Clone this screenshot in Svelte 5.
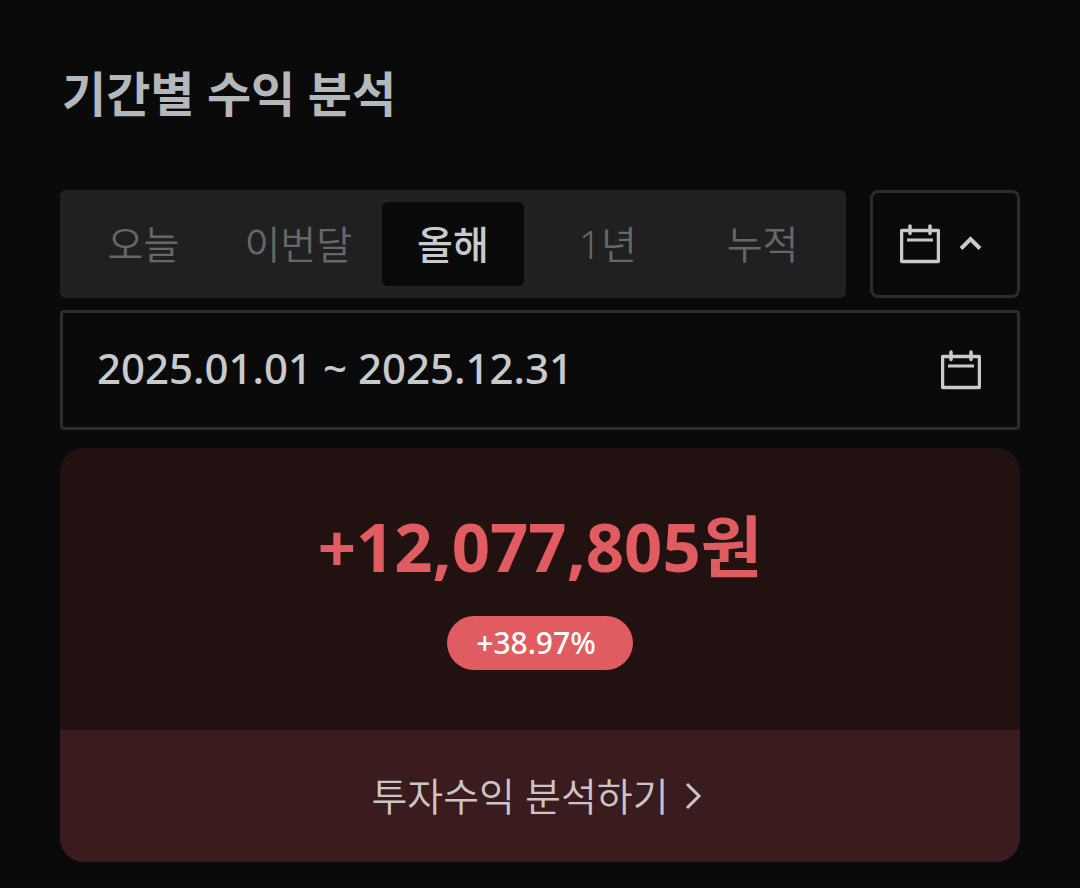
<script lang="ts">
  type Period = { id: string; label: string };

  const periods: Period[] = [
    { id: 'today', label: '오늘' },
    { id: 'month', label: '이번달' },
    { id: 'thisYear', label: '올해' },
    { id: 'year', label: '1년' },
    { id: 'total', label: '누적' }
  ];

  let selected = $state('thisYear');
  let rangeOpen = $state(true);
  let range = $state('2025.01.01 ~ 2025.12.31');

  const profit = 12077805;
  const rate = 38.97;

  function signed(value: number): string {
    return (value > 0 ? '+' : '') + value.toLocaleString('en-US');
  }
</script>

{#snippet calendar()}
  <svg class="calendar" viewBox="0 0 40 40" aria-hidden="true">
    <rect x="1.5" y="6.5" width="37" height="31" rx="1" />
    <path d="M10 2v7.5M30 2v7.5" stroke-linecap="round" />
    <path d="M7 16h26" stroke-width="3" />
  </svg>
{/snippet}

<main class="page">
  <h1>기간별 수익 분석</h1>

  <div class="filters">
    <div class="tabs">
      {#each periods as period}
        <button
          type="button"
          class="tab"
          class:active={selected === period.id}
          aria-pressed={selected === period.id}
          onclick={() => selected = period.id}
        >{period.label}</button>
      {/each}
    </div>
    <button
      type="button"
      class="range-toggle"
      aria-label="기간 선택"
      aria-expanded={rangeOpen}
      onclick={() => rangeOpen = !rangeOpen}
    >
      {@render calendar()}
      <svg class="chevron" class:closed={!rangeOpen} viewBox="0 0 30 30" aria-hidden="true">
        <path d="M1 19.5l9.5-9.5 9.5 9.5" />
      </svg>
    </button>
  </div>

  {#if rangeOpen}
    <label class="range">
      <input type="text" aria-label="조회 기간" readonly bind:value={range} />
      {@render calendar()}
    </label>
  {/if}

  <section class="card">
    <div class="summary">
      <strong class="profit">{signed(profit)}원</strong>
      <span class="rate">{signed(rate)}%</span>
    </div>
    <a class="analyze" href="#analysis">
      투자수익 분석하기
      <svg class="arrow" viewBox="0 0 30 30" aria-hidden="true">
        <path d="M8 3l12 12L8 27" />
      </svg>
    </a>
  </section>
</main>

<style>
  :global(body) {
    margin: 0;
    background: #0a0a0a;
  }

  .page {
    --color-text: #c8cace;
    --color-border: #2c2c2c;
    --color-up: #e05c60;

    box-sizing: border-box;
    padding: 60px 60px 24px;
    font-family: "Noto Sans", "Noto Sans CJK KR", sans-serif;
    color: var(--color-text);
  }

  h1 {
    margin: 0 0 62px;
    padding-left: 2px;
    font-size: 48px;
    line-height: 68px;
    font-weight: 700;
    color: #b4b8bb;
  }

  button,
  input {
    box-sizing: border-box;
    margin: 0;
    font-family: inherit;
    color: inherit;
  }

  button {
    cursor: pointer;
  }

  svg {
    flex-shrink: 0;
    fill: none;
    stroke: currentColor;
  }

  .filters {
    display: flex;
    gap: 24px;
    margin-bottom: 12px;
  }

  .tabs {
    flex: 1;
    display: flex;
    gap: 12px;
    padding: 12px;
    border-radius: 6px;
    background: #202221;
  }

  .tab {
    flex: 1 1 0;
    height: 84px;
    padding: 0;
    border: 0;
    border-radius: 6px;
    background: #202020;
    font-size: 39px;
    line-height: 60px;
    font-weight: 350;
    color: #666768;
  }

  .tab.active {
    background: #0a0a0a;
    font-weight: 500;
    color: var(--color-text);
  }

  .range-toggle {
    display: flex;
    align-items: center;
    justify-content: center;
    gap: 20px;
    width: 150px;
    padding: 0;
    border: 3px solid var(--color-border);
    border-radius: 8px;
    background: transparent;
  }

  .calendar {
    width: 40px;
    height: 40px;
    stroke-width: 3.5;
  }

  .chevron {
    width: 30px;
    height: 30px;
    stroke-width: 4;
  }

  .chevron.closed {
    transform: rotate(180deg);
  }

  .range {
    display: flex;
    align-items: center;
    box-sizing: border-box;
    height: 120px;
    margin-bottom: 18px;
    padding: 0 36px 0 34px;
    border: 3px solid var(--color-border);
    border-radius: 4px;
  }

  .range input {
    flex: 1;
    min-width: 0;
    padding: 0 0 4px;
    border: 0;
    outline: 0;
    background: transparent;
    font-size: 42px;
    line-height: 60px;
    font-weight: 500;
  }

  .card {
    overflow: hidden;
    border-radius: 24px;
    background: #211111;
  }

  .summary {
    display: flex;
    flex-direction: column;
    align-items: center;
    gap: 20px;
    padding: 48px 24px 60px;
  }

  .profit {
    font-size: 67px;
    line-height: 100px;
    font-weight: 700;
    color: var(--color-up);
  }

  .rate {
    padding: 0 37px 0 29px;
    border-radius: 27px;
    background: var(--color-up);
    font-size: 30px;
    line-height: 54px;
    font-weight: 500;
    color: #fff;
  }

  .analyze {
    display: flex;
    align-items: center;
    justify-content: center;
    gap: 10px;
    padding: 36px 24px;
    background: #3a1b1e;
    font-size: 39px;
    line-height: 60px;
    font-weight: 350;
    color: #cdc4c8;
    text-decoration: none;
  }

  .arrow {
    width: 30px;
    height: 30px;
    stroke-width: 3;
  }
</style>
